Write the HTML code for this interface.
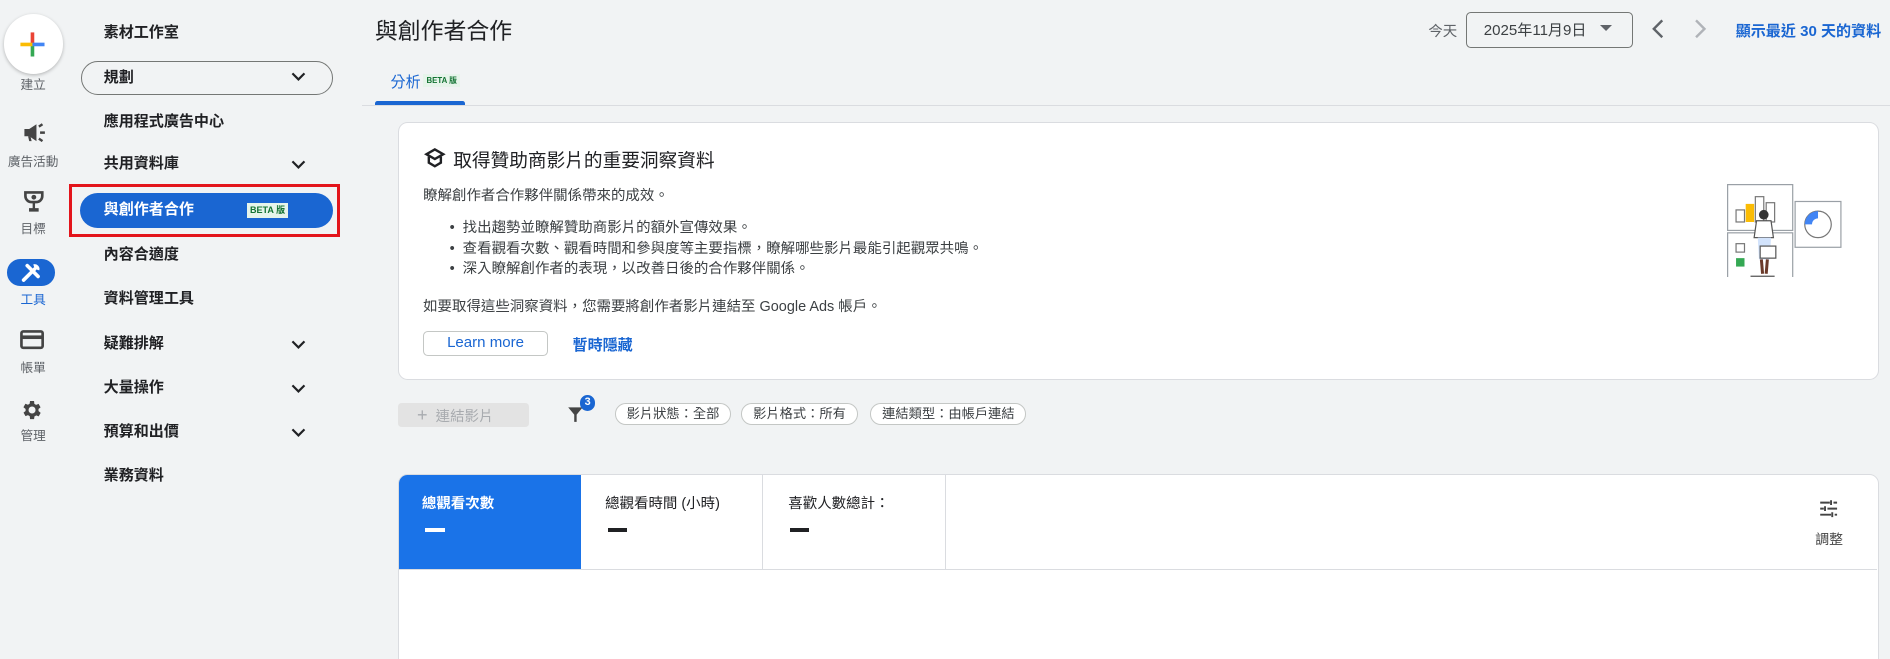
<!DOCTYPE html>
<html><head><meta charset="utf-8">
<style>
html,body{margin:0;padding:0;background:#f1f3f4;overflow:hidden;}
body{width:1890px;height:659px;}
#root{zoom:1.20536;width:1568px;height:547px;position:relative;font-family:"Liberation Sans","Noto Sans CJK TC",sans-serif;color:#202124;background:#f1f3f4;overflow:hidden;}
.a{position:absolute;}
.rl{position:absolute;width:55px;text-align:center;font-size:10.5px;color:#5f6368;left:0;}
.nav{position:absolute;left:86px;font-size:12.5px;font-weight:bold;color:#202124;line-height:16px;}
.chev{position:absolute;left:241px;width:14px;height:10px;}
.chip{position:absolute;top:334px;height:17px;border:1px solid #c4c7c5;border-radius:9px;background:#fff;font-size:11px;line-height:17px;padding:0 9px;color:#3c4043;}
</style></head><body><div id="root">

<!-- left rail -->
<div class="a" style="left:3px;top:12px;width:49px;height:49px;border-radius:50%;background:#fff;box-shadow:0 1px 3px rgba(0,0,0,.25);"></div>
<svg class="a" style="left:15px;top:25px" width="24" height="24" viewBox="0 0 24 24"><rect x="10.5" y="2" width="3" height="10" fill="#ea4335"/><rect x="10.5" y="12" width="3" height="10" fill="#34a853"/><rect x="2" y="10.5" width="10" height="3" fill="#fbbc04"/><rect x="12" y="10.5" width="10" height="3" fill="#4285f4"/></svg>
<div class="rl" style="top:61px">建立</div>

<svg class="a" style="left:18px;top:102px" width="20" height="16" viewBox="0 0 20 16"><path d="M2 5h4l6-4v14l-6-4H2z" fill="#444"/><path d="M5 11l1 4h2l-1-4" fill="#444"/><path d="M14 3l3-2M15 8h4M14 13l3 2" stroke="#444" stroke-width="2"/></svg>
<div class="rl" style="top:125px">廣告活動</div>

<svg class="a" style="left:19px;top:158px" width="18" height="20" viewBox="0 0 18 20"><path d="M2 2h14v3a5 5 0 0 1-5 5h-4a5 5 0 0 1-5-5z" fill="none" stroke="#444" stroke-width="2.2"/><circle cx="9" cy="6" r="2" fill="#444"/><path d="M8 10h2v5h3v3H5v-3h3z" fill="#444"/></svg>
<div class="rl" style="top:181px">目標</div>

<div class="a" style="left:6px;top:215px;width:40px;height:22px;border-radius:11px;background:#1a66d2;"></div>
<svg class="a" style="left:17px;top:217px" width="18" height="18" viewBox="0 0 18 18"><path d="M3 15L12 6M6 3l9 9" stroke="#fff" stroke-width="3" stroke-linecap="round"/><path d="M11 2a4 4 0 0 1 5 5l-3-1-1-1z" fill="#fff"/></svg>
<div class="rl" style="top:240px;color:#1a66d2;">工具</div>

<svg class="a" style="left:17px;top:274px" width="20" height="16" viewBox="0 0 20 16"><rect x="1.2" y="1.2" width="17.6" height="13.6" rx="1.5" fill="none" stroke="#444" stroke-width="2.2"/><rect x="1" y="4.5" width="18" height="3" fill="#444"/></svg>
<div class="rl" style="top:296px">帳單</div>

<svg class="a" style="left:17px;top:330px" width="20" height="20" viewBox="0 0 24 24"><path fill="#444" d="M19.4 13a7.7 7.7 0 0 0 0-2l2.1-1.6-2-3.5-2.5 1a7 7 0 0 0-1.7-1L15 3h-4l-.4 2.7a7 7 0 0 0-1.7 1l-2.5-1-2 3.5L6.6 11a7.7 7.7 0 0 0 0 2l-2.1 1.6 2 3.5 2.5-1a7 7 0 0 0 1.7 1L11 21h4l.4-2.7a7 7 0 0 0 1.7-1l2.5 1 2-3.5zM13 15.5a3.5 3.5 0 1 1 0-7 3.5 3.5 0 0 1 0 7z" transform="translate(-1 0)"/></svg>
<div class="rl" style="top:353px">管理</div>

<!-- nav -->
<div class="nav" style="top:19px">素材工作室</div>
<div class="a" style="left:67px;top:51px;width:208px;height:26px;border:1px solid #747775;border-radius:14px;"></div>
<div class="nav" style="top:56px">規劃</div>
<svg class="chev" style="top:59px" viewBox="0 0 14 10"><path d="M2 2l5 5 5-5" fill="none" stroke="#202124" stroke-width="1.8"/></svg>
<div class="nav" style="top:93px">應用程式廣告中心</div>
<div class="nav" style="top:128px">共用資料庫</div>
<svg class="chev" style="top:132px" viewBox="0 0 14 10"><path d="M2 2l5 5 5-5" fill="none" stroke="#202124" stroke-width="1.8"/></svg>
<div class="a" style="left:57px;top:153px;width:220px;height:39px;border:3px solid #e3141b;"></div>
<div class="a" style="left:66px;top:160px;width:210px;height:29px;border-radius:15px;background:#1a66d2;"></div>
<div class="nav" style="top:166px;color:#fff;">與創作者合作</div>
<div class="a" style="left:205px;top:168px;width:34px;height:13px;background:#e6f4ea;color:#137333;font-size:7.5px;font-weight:bold;line-height:13px;text-align:center;">BETA 版</div>
<div class="nav" style="top:203px">內容合適度</div>
<div class="nav" style="top:240px">資料管理工具</div>
<div class="nav" style="top:277px">疑難排解</div>
<svg class="chev" style="top:281px" viewBox="0 0 14 10"><path d="M2 2l5 5 5-5" fill="none" stroke="#202124" stroke-width="1.8"/></svg>
<div class="nav" style="top:314px">大量操作</div>
<svg class="chev" style="top:318px" viewBox="0 0 14 10"><path d="M2 2l5 5 5-5" fill="none" stroke="#202124" stroke-width="1.8"/></svg>
<div class="nav" style="top:350px">預算和出價</div>
<svg class="chev" style="top:354px" viewBox="0 0 14 10"><path d="M2 2l5 5 5-5" fill="none" stroke="#202124" stroke-width="1.8"/></svg>
<div class="nav" style="top:387px">業務資料</div>

<!-- header -->
<div class="a" style="left:311px;top:10px;font-size:19px;">與創作者合作</div>
<div class="a" style="left:1185px;top:17px;font-size:12px;color:#5f6368;">今天</div>
<div class="a" style="left:1216px;top:10px;width:137px;height:28px;border:1px solid #747775;border-radius:4px;"></div>
<div class="a" style="left:1231px;top:16px;font-size:12.5px;color:#3c4043;">2025年11月9日</div>
<svg class="a" style="left:1327px;top:21px" width="10" height="6"><path d="M0 0h10L5 5z" fill="#5f6368"/></svg>
<svg class="a" style="left:1368px;top:15px" width="16" height="18"><path d="M11 2L4 9l7 7" fill="none" stroke="#5f6368" stroke-width="2"/></svg>
<svg class="a" style="left:1402px;top:15px" width="16" height="18"><path d="M5 2l7 4 0 0-7 7" fill="none" stroke="#b0b3b8" stroke-width="0"/><path d="M5 2l7 7-7 7" fill="none" stroke="#b0b3b8" stroke-width="2"/></svg>
<div class="a" style="left:1440px;top:17px;font-size:12.5px;font-weight:bold;color:#1a66d2;">顯示最近 30 天的資料</div>

<div class="a" style="left:324px;top:59px;font-size:12.5px;color:#1a66d2;">分析</div>
<div class="a" style="left:351px;top:61px;width:31px;height:11px;background:#e6f4ea;color:#137333;font-size:6.5px;font-weight:bold;line-height:11px;text-align:center;">BETA 版</div>
<div class="a" style="left:300px;top:87px;width:1268px;height:1px;background:#dadce0;"></div>
<div class="a" style="left:311px;top:84px;width:75px;height:3px;background:#1a66d2;border-radius:2px 2px 0 0;"></div>

<!-- card -->
<div class="a" style="left:330px;top:101px;width:1227px;height:213px;background:#fff;border:1px solid #dadce0;border-radius:8px;"></div>
<svg class="a" style="left:352px;top:122px" width="18" height="18" viewBox="0 0 18 18"><path d="M9 2l7 4-7 4-7-4z" fill="none" stroke="#202124" stroke-width="2"/><path d="M4 8v5l5 3 5-3V8" fill="none" stroke="#202124" stroke-width="2"/></svg>
<div class="a" style="left:376px;top:121px;font-size:15.5px;">取得贊助商影片的重要洞察資料</div>
<div class="a" style="left:351px;top:153px;font-size:12px;color:#3c4043;">瞭解創作者合作夥伴關係帶來的成效。</div>
<div class="a" style="left:373px;top:181px;font-size:12px;color:#3c4043;line-height:17px;">
<div>•&nbsp;&nbsp;找出趨勢並瞭解贊助商影片的額外宣傳效果。</div>
<div>•&nbsp;&nbsp;查看觀看次數、觀看時間和參與度等主要指標，瞭解哪些影片最能引起觀眾共鳴。</div>
<div>•&nbsp;&nbsp;深入瞭解創作者的表現，以改善日後的合作夥伴關係。</div></div>
<div class="a" style="left:351px;top:245px;font-size:12px;color:#3c4043;">如要取得這些洞察資料，您需要將創作者影片連結至 Google Ads 帳戶。</div>
<div class="a" style="left:351px;top:275px;width:102px;height:19px;border:1px solid #c4c7c5;border-radius:4px;text-align:center;font-size:12.5px;line-height:19px;color:#1a66d2;">Learn more</div>
<div class="a" style="left:475px;top:277px;font-size:12.5px;color:#1a66d2;font-weight:bold;">暫時隱藏</div>

<!-- illustration -->
<svg class="a" style="left:1430px;top:150px" width="100" height="80" viewBox="0 0 100 80">
<rect x="3" y="3" width="54" height="38" fill="#fff" stroke="#9aa0a6"/>
<rect x="3" y="43" width="54" height="38" fill="#fff" stroke="#9aa0a6"/>
<rect x="59" y="17" width="38" height="38" fill="#fff" stroke="#9aa0a6"/>
<rect x="10" y="24" width="7" height="10" fill="none" stroke="#777"/>
<rect x="18" y="19" width="7" height="15" fill="#fbbc04"/>
<rect x="26" y="13" width="7" height="21" fill="none" stroke="#777"/>
<rect x="35" y="18" width="7" height="16" fill="none" stroke="#777"/>
<circle cx="78" cy="36" r="11" fill="none" stroke="#777"/>
<path d="M67 36a11 11 0 0 1 11-11v6a5 5 0 0 0-5 5z" fill="#4285f4"/>
<rect x="10" y="52" width="7" height="7" fill="none" stroke="#777"/>
<rect x="10" y="64" width="7" height="7" fill="#34a853"/>
<circle cx="33" cy="28" r="4" fill="#333"/>
<path d="M27 33h12l2 14H25z" fill="#fff" stroke="#555"/>
<path d="M28 47h11l-1 18h-9z" fill="#d2e3fc"/>
<path d="M31 65l1 12M36 65l-1 12" stroke="#6b3a2a" stroke-width="2.5"/>
<rect x="30" y="54" width="13" height="10" fill="#fff" stroke="#555"/>
<path d="M22 79h20" stroke="#555"/>
</svg>

<!-- toolbar -->
<div class="a" style="left:330px;top:334px;width:109px;height:20px;background:#e3e3e3;border-radius:3px;color:#a8abaf;font-size:12px;line-height:20px;"><span style="margin-left:16px;font-size:15px;">+</span>&nbsp; 連結影片</div>
<svg class="a" style="left:470px;top:336px" width="14" height="16" viewBox="0 0 14 16"><path d="M1 2h12L8 8v6H6V8z" fill="#444"/></svg>
<div class="a" style="left:481px;top:328px;width:13px;height:13px;border-radius:50%;background:#1a66d2;color:#fff;font-size:9px;font-weight:bold;text-align:center;line-height:13px;">3</div>
<div class="chip" style="left:510px;">影片狀態：全部</div>
<div class="chip" style="left:615px;">影片格式：所有</div>
<div class="chip" style="left:722px;">連結類型：由帳戶連結</div>

<!-- metrics card -->
<div class="a" style="left:330px;top:393px;width:1227px;height:170px;background:#fff;border:1px solid #dadce0;border-radius:8px;"></div>
<div class="a" style="left:331px;top:394px;width:151px;height:78px;background:#1a73e8;border-radius:7px 0 0 0;"></div>
<div class="a" style="left:331px;top:472px;width:1226px;height:1px;background:#dadce0;"></div>
<div class="a" style="left:632px;top:394px;width:1px;height:78px;background:#dadce0;"></div>
<div class="a" style="left:784px;top:394px;width:1px;height:78px;background:#dadce0;"></div>
<div class="a" style="left:350px;top:408px;font-size:12px;color:#fff;font-weight:bold;">總觀看次數</div>
<div class="a" style="left:353px;top:438px;width:16px;height:3px;background:#fff;"></div>
<div class="a" style="left:502px;top:408px;font-size:12px;">總觀看時間 (小時)</div>
<div class="a" style="left:504px;top:438px;width:16px;height:3px;background:#202124;"></div>
<div class="a" style="left:654px;top:408px;font-size:12px;">喜歡人數總計：</div>
<div class="a" style="left:655px;top:438px;width:16px;height:3px;background:#202124;"></div>
<svg class="a" style="left:1509px;top:414px" width="16" height="16" viewBox="0 0 16 16"><path d="M1 3h8M12 3h3M1 8h3M7 8h8M1 13h9M13 13h2M10 1v4M5 6v4M11 11v4" stroke="#444" stroke-width="1.6"/></svg>
<div class="a" style="left:1506px;top:438px;font-size:11.5px;color:#444;">調整</div>

</div></body></html>
